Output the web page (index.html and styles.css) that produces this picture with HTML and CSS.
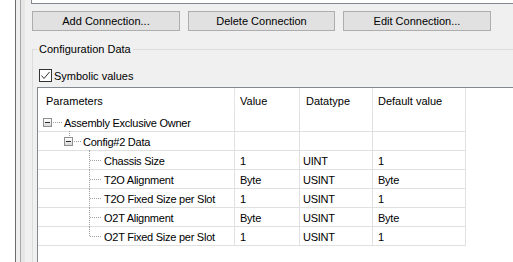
FILE: index.html
```html
<!DOCTYPE html>
<html>
<head>
<meta charset="utf-8">
<link rel="stylesheet" href="styles.css">
</head>
<body>
<div class="window">
  <div class="gutter"></div>
  <div class="frame">
    <div class="inner">
      <div class="content">
        <div class="topbox"></div>
        <div class="buttons">
          <button class="btn">Add Connection...</button>
          <button class="btn">Delete Connection</button>
          <button class="btn">Edit Connection...</button>
        </div>
        <fieldset class="group">
          <legend class="legend">Configuration Data</legend>
          <label class="check">
            <span class="box"><svg width="11" height="11" viewBox="0 0 11 11"><path d="M1.5 5.5 L4 8.5 L9.5 2" fill="none" stroke="#333" stroke-width="1"/></svg></span>
            <span>Symbolic values</span>
          </label>
          <div class="list">
            <div class="head">
              <div class="hc c1">Parameters</div>
              <div class="hc c2">Value</div>
              <div class="hc c3">Datatype</div>
              <div class="hc c4">Default value</div>
            </div>
            <div class="row">
              <div class="cell c1 tree l1"><span class="exp"></span><span class="hdot"></span><span class="t">Assembly Exclusive Owner</span></div>
              <div class="cell c2"></div><div class="cell c3"></div><div class="cell c4"></div>
            </div>
            <div class="row">
              <div class="cell c1 tree l2"><span class="vup"></span><span class="exp"></span><span class="hdot"></span><span class="t">Config#2 Data</span></div>
              <div class="cell c2"></div><div class="cell c3"></div><div class="cell c4"></div>
            </div>
            <div class="row">
              <div class="cell c1 tree l3"><span class="vline"></span><span class="hdot"></span><span class="t">Chassis Size</span></div>
              <div class="cell c2">1</div><div class="cell c3">UINT</div><div class="cell c4">1</div>
            </div>
            <div class="row">
              <div class="cell c1 tree l3"><span class="vline"></span><span class="hdot"></span><span class="t">T2O Alignment</span></div>
              <div class="cell c2">Byte</div><div class="cell c3">USINT</div><div class="cell c4">Byte</div>
            </div>
            <div class="row">
              <div class="cell c1 tree l3"><span class="vline"></span><span class="hdot"></span><span class="t">T2O Fixed Size per Slot</span></div>
              <div class="cell c2">1</div><div class="cell c3">USINT</div><div class="cell c4">1</div>
            </div>
            <div class="row">
              <div class="cell c1 tree l3"><span class="vline"></span><span class="hdot"></span><span class="t">O2T Alignment</span></div>
              <div class="cell c2">Byte</div><div class="cell c3">USINT</div><div class="cell c4">Byte</div>
            </div>
            <div class="row">
              <div class="cell c1 tree l3"><span class="vline last"></span><span class="hdot"></span><span class="t">O2T Fixed Size per Slot</span></div>
              <div class="cell c2">1</div><div class="cell c3">USINT</div><div class="cell c4">1</div>
            </div>
          </div>
        </fieldset>
      </div>
    </div>
  </div>
</div>
</body>
</html>
```
FILE: styles.css
```css
html, body {
  margin: 0;
  padding: 0;
  background: #ffffff;
}
body {
  width: 513px;
  height: 262px;
  overflow: hidden;
  font-family: "Liberation Sans", Arial, sans-serif;
  font-size: 11px;
  color: #000;
}
.window {
  display: flex;
  height: 262px;
  overflow: hidden;
}
.gutter {
  width: 15px;
  flex: none;
  background: #ffffff;
}
.frame {
  flex: 1;
  border-left: 1px solid #6b6b6b;
  background: #f0f0f0;
  padding-left: 4px;
  display: flex;
  min-width: 0;
}
.inner {
  flex: 1;
  border-left: 1px solid #a8a8a8;
  background: linear-gradient(90deg, #e6e6e6 0, #e6e6e6 4px, #f0f0f0 4px);
  padding-left: 10px;
  min-width: 0;
  overflow: hidden;
}
.content {
  display: flex;
  flex-direction: column;
  width: 520px;
}
.topbox {
  height: 3px;
  border-left: 1px solid #828790;
  border-bottom: 1px solid #828790;
  background: #ffffff;
}
.buttons {
  display: flex;
  gap: 8px;
  margin: 7px 0 0 1px;
}
.btn {
  width: 148px;
  height: 20px;
  background: #e1e1e1;
  border: 1px solid #adadad;
  font-family: inherit;
  font-size: 11px;
  color: #000;
  padding: 0;
  margin: 0;
}
.btn:nth-child(2) { width: 147px; }
.group {
  margin: 10px 0 0 1px;
  padding: 0 0 0 5px;
  border: 1px solid #dcdcdc;
  border-right: none;
  border-bottom: none;
  min-width: 0;
  height: 260px;
}
.legend {
  padding: 0 2px;
  margin-left: -1px;
  line-height: 16px;
}
.check {
  display: flex;
  align-items: center;
  gap: 2px;
  margin-top: 11px;
  padding-left: 1px;
  height: 15px;
}
.box {
  width: 11px;
  height: 11px;
  border: 1px solid #333;
  background: #fff;
  display: flex;
}
.list {
  margin: 4px 0 0 -1px;
  border-left: 1px solid #828790;
  border-top: 1px solid #828790;
  background: #fff;
  height: 200px;
  font-size: 11px;
}
.head {
  display: flex;
  height: 25px;
}
.hc {
  box-sizing: border-box;
  border-right: 1px solid #e5e5e5;
  display: flex;
  align-items: center;
  padding-top: 1px;
}
.row {
  display: flex;
  height: 19px;
  letter-spacing: -0.25px;
}
.cell {
  box-sizing: border-box;
  border-right: 1px solid #e0e0e0;
  border-bottom: 1px solid #e0e0e0;
  display: flex;
  align-items: center;
  white-space: nowrap;
  padding-top: 2px;
}
.c1 { width: 197px; padding-left: 8px; }
.c2 { width: 65px; padding-left: 5px; }
.c3 { width: 73px; padding-left: 3px; }
.c4 { width: 93px; padding-left: 5px; }
.hc.c3 { padding-left: 6px; }
.tree { position: relative; padding-left: 0; }
.tree .t { position: absolute; top: 4px; }
.l1 .t { left: 26px; }
.l2 .t { left: 45px; }
.l3 .t { left: 66px; }
.exp {
  position: absolute;
  top: 5px;
  width: 7px;
  height: 7px;
  border: 1px solid #8f8f8f;
  background: linear-gradient(#ffffff, #d8d8d8);
}
.exp::after {
  content: "";
  position: absolute;
  left: 1px;
  top: 3px;
  width: 5px;
  height: 1px;
  background: #2b2b2b;
}
.l1 .exp { left: 5px; }
.l2 .exp { left: 26px; }
.hdot {
  position: absolute;
  top: 9px;
  height: 0;
  border-top: 1px dotted #a0a0a0;
}
.l1 .hdot { left: 15px; width: 9px; }
.l2 .hdot { left: 36px; width: 7px; }
.l3 .hdot { left: 52px; width: 11px; }
.vup {
  position: absolute;
  left: 31px;
  top: -1px;
  height: 5px;
  border-left: 1px dotted #a0a0a0;
}
.vline {
  position: absolute;
  left: 51px;
  top: -1px;
  height: 20px;
  border-left: 1px dotted #a0a0a0;
}
.vline.last { height: 10px; }
```
